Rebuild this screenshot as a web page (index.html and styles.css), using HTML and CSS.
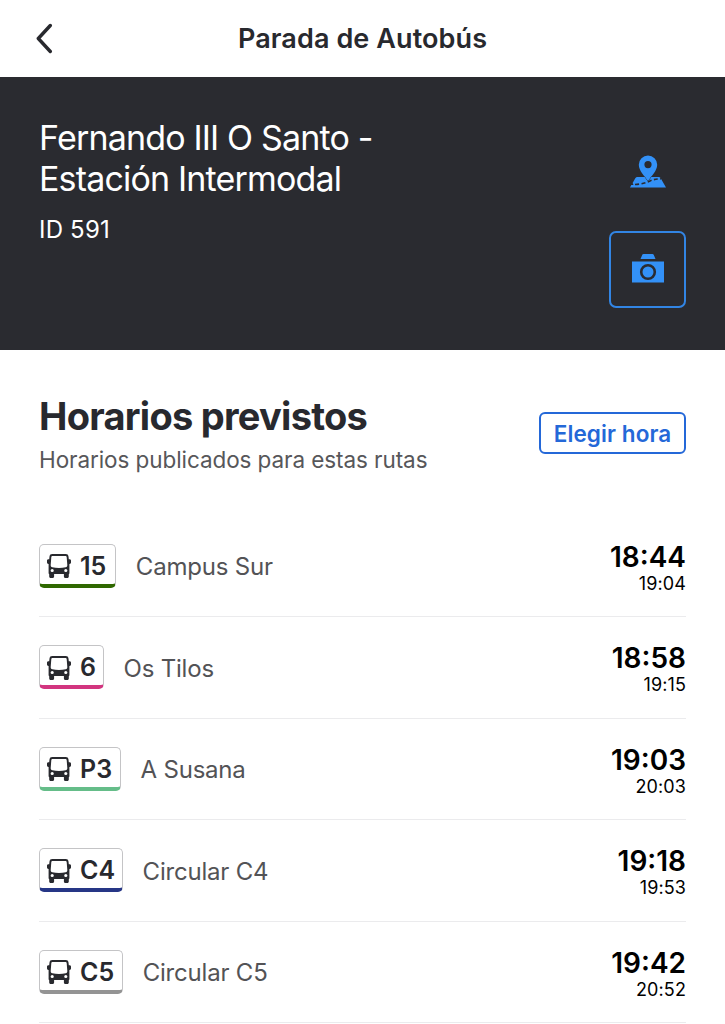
FILE: index.html
```html
<!DOCTYPE html>
<html lang="es">
<head>
    <meta charset="UTF-8">
    <meta name="viewport" content="width=device-width, initial-scale=1.0">
    <title>Parada de Autobús</title>
    <link rel="stylesheet" href="styles.css">
</head>
<body>
    <svg class="sprite" width="0" height="0">
        <symbol id="bus" viewBox="0 0 24 24">
            <path fill-rule="evenodd" d="M5.300 0h13.400c1.700 0 2.600.8 2.800 2.500l.3 2.800h.8c.8 0 1.400.6 1.400 1.400v1.900c0 .8-.6 1.400-1.400 1.400h-.2v9c0 .6-.2 1-.6 1.200v2.200c0 .9-.6 1.500-1.500 1.500h-1.900c-.9 0-1.500-.6-1.500-1.500V20H7.100v2.400c0 .9-.6 1.500-1.500 1.500H3.700c-.9 0-1.500-.6-1.500-1.500v-2.200c-.4-.2-.6-.6-.6-1.200v-9h-.2C.6 10 0 9.400 0 8.600V6.700c0-.8.6-1.400 1.400-1.400h.8l.3-2.800C2.700.8 3.600 0 5.300 0zM5.600 2c-.8 0-1.200.4-1.300 1.200L3.700 11c-.1 1.300.4 2 1.600 2.300 4 1 9.400 1 13.400 0 1.200-.3 1.700-1 1.600-2.300l-.6-7.800c-.1-.8-.5-1.200-1.300-1.200zM5.200 14.900a1.600 1.600 0 1 0 0 3.200 1.600 1.600 0 0 0 0-3.200zM18.800 14.900a1.600 1.600 0 1 0 0 3.200 1.600 1.600 0 0 0 0-3.200z"/>
        </symbol>
    </svg>

    <header class="navbar">
        <svg class="back" viewBox="0 0 18 32">
            <path d="M14.300 2.500 2.300 15.500 14.300 28.500"/>
        </svg>
        <h1>Parada de Autobús</h1>
    </header>

    <section class="stop">
        <div class="stop-info">
            <h2>Fernando III O Santo - <br>Estación Intermodal</h2>
            <p>ID 591</p>
        </div>
        <div class="stop-actions">
            <svg class="map-icon" viewBox="0 0 36 34">
                <path d="M7.500 22h21c1 0 1.700.4 2.200 1.200L36 32.500H0L1.300 30h2.200L2.600 28l2.700-4.800c.5-.8 1.200-1.200 2.200-1.200z"/>
                <path class="road" d="M5 29.500C12 29 16 27.700 20 26s6-2 11-2.200"/>
                <path class="pin" fill-rule="evenodd" d="M18 .5a9.200 9.200 0 0 1 9.200 9.200c0 6-5.700 11-9.200 16.300C14.500 20.700 8.800 15.700 8.800 9.700A9.200 9.200 0 0 1 18 .5zM18 6a3.600 3.600 0 1 0 0 7.200A3.600 3.600 0 0 0 18 6z"/>
            </svg>
            <button class="photo-button">
                <svg viewBox="0 0 32 29">
                    <path d="M11.500 0h9c.6 0 1 .3 1.200.8L23.500 5h-15l1.800-4.200c.2-.5.6-.8 1.200-.8zM0 7.500h32v21H0z"/>
                    <circle class="lens" cx="16" cy="18" r="6.800"/>
                </svg>
            </button>
        </div>
    </section>

    <main class="schedule">
        <div class="schedule-head">
            <div>
                <h3>Horarios previstos</h3>
                <p>Horarios publicados para estas rutas</p>
            </div>
            <button class="time-button">Elegir hora</button>
        </div>

        <ul class="routes">
            <li>
                <span class="badge green"><svg><use href="#bus"/></svg>15</span>
                <span class="name">Campus Sur</span>
                <div class="times"><strong>18:44</strong><small>19:04</small></div>
            </li>
            <li>
                <span class="badge pink"><svg><use href="#bus"/></svg>6</span>
                <span class="name">Os Tilos</span>
                <div class="times"><strong>18:58</strong><small>19:15</small></div>
            </li>
            <li>
                <span class="badge mint"><svg><use href="#bus"/></svg>P3</span>
                <span class="name">A Susana</span>
                <div class="times"><strong>19:03</strong><small>20:03</small></div>
            </li>
            <li>
                <span class="badge blue"><svg><use href="#bus"/></svg>C4</span>
                <span class="name">Circular C4</span>
                <div class="times"><strong>19:18</strong><small>19:53</small></div>
            </li>
            <li>
                <span class="badge gray"><svg><use href="#bus"/></svg>C5</span>
                <span class="name">Circular C5</span>
                <div class="times"><strong>19:42</strong><small>20:52</small></div>
            </li>
        </ul>
    </main>
</body>
</html>
```
FILE: styles.css
```css
* {
    box-sizing: border-box;
    margin: 0;
    padding: 0;
}
body {
    font-family: Inter, "Liberation Sans", sans-serif;
    background-color: #fff;
    color: #28292e;
    height: 1024px;
    overflow: hidden;
}
button {
    font-family: inherit;
    background: none;
    cursor: pointer;
}
.sprite {
    display: block;
}
.navbar {
    height: 77px;
    padding: 0 36px;
    display: grid;
    grid-template-columns: 40px 1fr 40px;
    align-items: center;
}
.navbar h1 {
    font-size: 27px;
    font-weight: 600;
    letter-spacing: 0.1px;
    text-align: center;
    white-space: nowrap;
}
.back {
    width: 18px;
    height: 32px;
    fill: none;
    stroke: #28292e;
    stroke-width: 3.4;
    stroke-linecap: round;
    stroke-linejoin: round;
}
.stop {
    height: 273px;
    padding: 40px 39px 0;
    background-color: #2a2b30;
    color: #fff;
    display: flex;
    justify-content: space-between;
}
.stop h2 {
    font-size: 34px;
    font-weight: 400;
    line-height: 41px;
    letter-spacing: -0.83px;
    white-space: nowrap;
}
.stop p {
    margin-top: 16px;
    font-size: 24px;
    line-height: 30px;
    letter-spacing: 0.2px;
}
.stop-actions {
    display: flex;
    flex-direction: column;
    align-items: center;
    padding-top: 38px;
}
.stop-actions svg {
    fill: #3391f7;
}
.map-icon {
    width: 36px;
    height: 34px;
}
.map-icon .road {
    fill: none;
    stroke: #2a2b30;
    stroke-width: 1.6;
    stroke-dasharray: 4 2.5;
}
.map-icon .pin {
    stroke: #2a2b30;
    stroke-width: 1;
    paint-order: stroke;
}
.photo-button {
    width: 77px;
    height: 77px;
    margin-top: 42px;
    border: 2px solid #3285e4;
    border-radius: 7px;
    display: flex;
    justify-content: center;
    align-items: center;
}
.photo-button svg {
    width: 32px;
    height: 29px;
    margin-bottom: 3px;
}
.photo-button .lens {
    stroke: #2a2b30;
    stroke-width: 2.6;
}
.schedule {
    padding: 42px 39px 0;
}
.schedule-head {
    display: flex;
    justify-content: space-between;
    align-items: center;
    height: 82px;
}
.schedule-head h3 {
    margin-top: 2px;
    font-size: 38px;
    font-weight: 700;
    line-height: 44px;
    letter-spacing: -0.73px;
}
.schedule-head p {
    margin-top: 7px;
    font-size: 22.5px;
    line-height: 30px;
    letter-spacing: -0.08px;
    color: #57575a;
}
.time-button {
    width: 147px;
    height: 42px;
    border: 2px solid #2468d8;
    border-radius: 6px;
    color: #2468d8;
    font-size: 22.5px;
    font-weight: 600;
    letter-spacing: 0.1px;
    white-space: nowrap;
}
.routes {
    margin-top: 41.5px;
    list-style: none;
}
.routes li {
    height: 101.5px;
    display: flex;
    align-items: center;
    border-bottom: 1px solid #ebebed;
}
.badge {
    height: 44px;
    padding: 4px 7px 0;
    border: 1px solid #c4c4c6;
    border-bottom: 4px solid;
    border-radius: 5px;
    display: flex;
    align-items: center;
    font-size: 25px;
    font-weight: 600;
    line-height: 35px;
}
.badge svg {
    width: 24px;
    height: 24px;
    margin-right: 9px;
    fill: #28292e;
}
.green { border-bottom-color: #2f6800; padding-right: 9px; }
.pink { border-bottom-color: #d2357f; }
.mint { border-bottom-color: #65bd89; padding-right: 8px; }
.blue { border-bottom-color: #263686; }
.gray { border-bottom-color: #949494; padding-right: 8px; }
.name {
    margin-left: 19.5px;
    padding-top: 2px;
    font-size: 24px;
    letter-spacing: -0.2px;
    color: #535356;
}
.times {
    margin-left: auto;
    padding-top: 3px;
    color: #000;
    text-align: right;
}
.times strong {
    display: block;
    font-size: 28px;
    font-weight: 600;
    line-height: 32px;
}
.times small {
    display: block;
    font-size: 18px;
    line-height: 21px;
    letter-spacing: 0.1px;
}
```
